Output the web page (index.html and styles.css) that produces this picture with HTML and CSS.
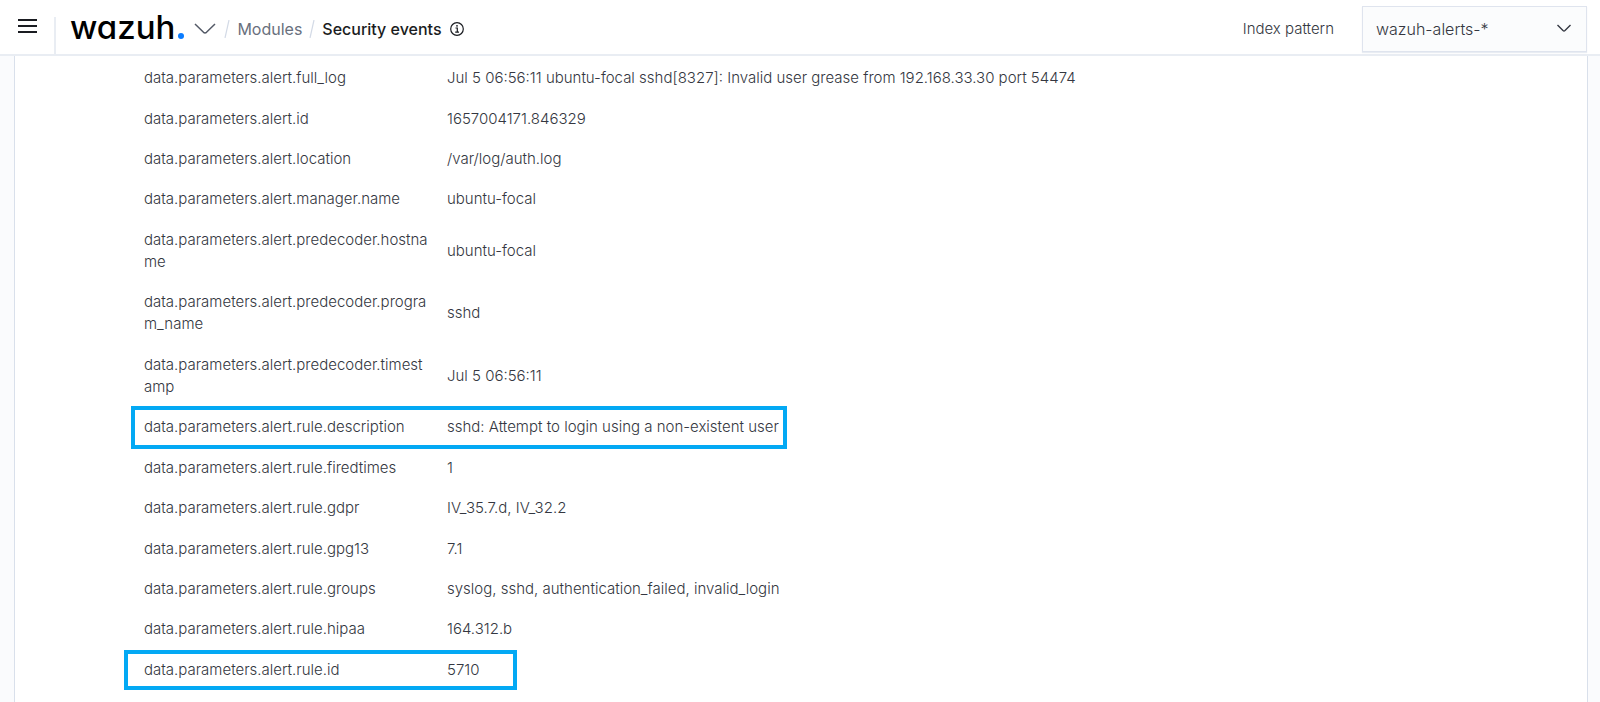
FILE: index.html
```
<!DOCTYPE html>
<html lang="en">
<head>
<meta charset="utf-8">
<title>Security events</title>
<link rel="stylesheet" href="styles.css">
</head>
<body>
<header class="header">
  <button class="menu-button" type="button" aria-label="Menu">
    <svg width="19" height="16" viewBox="0 0 19 16"><path d="M0 2h19M0 8h19M0 14h19" fill="none" stroke="#1a1c21" stroke-width="2"/></svg>
  </button>
  <nav class="breadcrumbs" aria-label="Breadcrumbs">
    <a class="logo" href="#">wazuh<span class="logo-dot"></span></a>
    <button class="app-button" type="button" aria-label="Open application menu">
      <svg width="22" height="12" viewBox="0 0 22 12"><path d="M1 1l8.500 8.300q1.500 1.200 3 0L21 1" fill="none" stroke="#535966" stroke-width="1.500"/></svg>
    </button>
    <svg class="slash" width="6" height="18" viewBox="0 0 6 18"><path d="M5 0L1 18" stroke="#d3dae6" stroke-width="1.200"/></svg>
    <a class="crumb" href="#">Modules</a>
    <svg class="slash" width="6" height="18" viewBox="0 0 6 18"><path d="M5 0L1 18" stroke="#d3dae6" stroke-width="1.200"/></svg>
    <span class="crumb crumb-current">Security events</span>
    <svg class="info" width="14" height="14" viewBox="0 0 14 14"><circle cx="7" cy="7" r="6.300" fill="none" stroke="#1a1c21" stroke-width="1.200"/><path d="M5.500 6h1.800v4M5.200 10.200h3.800" fill="none" stroke="#1a1c21" stroke-width="1.200"/><circle cx="7" cy="3.800" r="0.900" fill="#1a1c21"/></svg>
  </nav>
  <div class="pattern">
    <label for="pattern">Index pattern</label>
    <div class="select-wrap">
      <select id="pattern"><option>wazuh-alerts-*</option></select>
      <svg class="select-arrow" width="14" height="9" viewBox="0 0 14 9"><path d="M0.500 1l5.500 5.500q1 .9 2 0L13.500 1" fill="none" stroke="#343741" stroke-width="1.400"/></svg>
    </div>
  </div>
</header>
<main class="page">
  <section class="panel">
    <table class="fields">
      <tbody>
      <tr><th scope="row">data.parameters.alert.full_log</th><td>Jul 5 06:56:11 ubuntu-focal sshd[8327]: Invalid user grease from 192.168.33.30 port 54474</td></tr>
      <tr><th scope="row">data.parameters.alert.id</th><td>1657004171.846329</td></tr>
      <tr><th scope="row">data.parameters.alert.location</th><td>/var/log/auth.log</td></tr>
      <tr><th scope="row">data.parameters.alert.manager.name</th><td>ubuntu-focal</td></tr>
      <tr><th scope="row">data.parameters.alert.predecoder.hostname</th><td>ubuntu-focal</td></tr>
      <tr><th scope="row">data.parameters.alert.predecoder.program_name</th><td>sshd</td></tr>
      <tr><th scope="row">data.parameters.alert.predecoder.timestamp</th><td>Jul 5 06:56:11</td></tr>
      <tr><th scope="row" class="marked marked-wide">data.parameters.alert.rule.description</th><td>sshd: Attempt to login using a non-existent user</td></tr>
      <tr><th scope="row">data.parameters.alert.rule.firedtimes</th><td>1</td></tr>
      <tr><th scope="row">data.parameters.alert.rule.gdpr</th><td>IV_35.7.d, IV_32.2</td></tr>
      <tr><th scope="row">data.parameters.alert.rule.gpg13</th><td>7.1</td></tr>
      <tr><th scope="row">data.parameters.alert.rule.groups</th><td>syslog, sshd, authentication_failed, invalid_login</td></tr>
      <tr><th scope="row">data.parameters.alert.rule.hipaa</th><td>164.312.b</td></tr>
      <tr><th scope="row" class="marked marked-narrow">data.parameters.alert.rule.id</th><td>5710</td></tr>
      </tbody>
    </table>
  </section>
</main>
</body>
</html>
```
FILE: styles.css
```
*, *::after { box-sizing: border-box; }

body {
  margin: 0;
  min-height: 100vh;
  display: flex;
  flex-direction: column;
  background: #fafbfd;
  color: #343741;
  font-family: Inter, "Liberation Sans", sans-serif;
  font-size: 15px;
  font-weight: 300;
  line-height: 22px;
}

button {
  display: flex;
  padding: 0;
  border: 0;
  background: none;
}

a { text-decoration: none; }

.header {
  display: flex;
  align-items: stretch;
  height: 56px;
  padding-right: 13px;
  background: #fff;
  border-bottom: 2px solid #e9edf3;
}

.menu-button {
  align-items: center;
  justify-content: center;
  width: 54px;
  padding-bottom: 2px;
}

.breadcrumbs {
  display: flex;
  align-items: center;
  margin-top: 17px;
  padding: 0 0 14px 14px;
  border-left: 2px solid #e9edf3;
  font-size: 16px;
}

.logo {
  display: flex;
  align-items: baseline;
  margin-bottom: 3px;
  color: #000;
  font-size: 33px;
  font-weight: 500;
  font-feature-settings: "cv11";
}

.logo-dot {
  width: 6px;
  height: 6px;
  margin-left: 3px;
  border-radius: 50%;
  background: #0a7cff;
}

.app-button { margin: 0 8px 0 10px; }
.slash { margin-right: 7px; }
.crumb { margin-right: 7px; color: #69707d; font-weight: 400; }
.crumb-current { margin-right: 8px; color: #1a1c21; font-weight: 500; }

.pattern {
  display: flex;
  align-items: center;
  gap: 28px;
  margin-left: auto;
  padding-top: 4px;
}

.select-wrap { position: relative; }

.pattern select {
  appearance: none;
  width: 225px;
  height: 46px;
  padding: 0 13px;
  border: 1px solid #dfe4ee;
  border-radius: 0;
  background: #fbfcfd;
  box-shadow: 0 1px 1px #e9edf3;
  color: #343741;
  font: inherit;
  font-size: 16px;
}

.select-arrow {
  position: absolute;
  top: 18px;
  right: 16px;
  pointer-events: none;
}

.page {
  flex: 1;
  display: flex;
  padding: 0 12px 0 14px;
}

.panel {
  flex: 1;
  display: flex;
  flex-direction: column;
  padding: 2px 128px 12px;
  background: #fff;
  border: solid #d9e0eb;
  border-width: 0 1px;
}

.fields {
  flex: 1;
  table-layout: fixed;
  width: 100%;
  border-collapse: collapse;
}

.fields th,
.fields td {
  padding: 9px 8px;
  font-weight: 300;
  text-align: left;
  vertical-align: middle;
  overflow-wrap: anywhere;
}

.fields th {
  width: 296px;
  padding-right: 10px;
  padding-left: 1px;
}

.fields .marked { position: relative; }

.marked::after {
  content: "";
  position: absolute;
  border: 4px solid #03a9f4;
}

.marked-wide::after { inset: -1px auto -1px -12px; width: 656px; }
.marked-narrow::after { inset: 0 auto 0 -19px; width: 393px; }
```
